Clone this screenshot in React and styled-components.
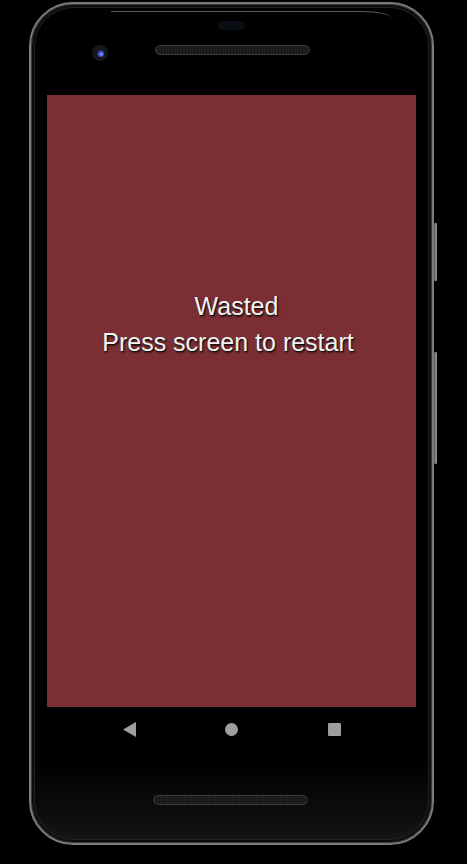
import styled, { createGlobalStyle } from 'styled-components';

const GlobalStyle = createGlobalStyle`
  html, body {
    margin: 0;
    padding: 0;
    background: #000;
  }
  body {
    width: 467px;
    height: 864px;
    overflow: hidden;
    font-family: "Liberation Sans", Arial, sans-serif;
  }
`;

const Stage = styled.div`
  width: 467px;
  height: 864px;
  padding: 2px 0 0 29px;
  box-sizing: border-box;
  background: #000;
`;

const PhoneBody = styled.div`
  position: relative;
  width: 405px;
  height: 843px;
  box-sizing: border-box;
  border: 2px solid #7c7c7c;
  border-radius: 44px;
  background: linear-gradient(to bottom, #000 0%, #000 90%, #0e0e0e 97%, #161616 100%);
  box-shadow: inset 0 0 0 1px #3a3a3a, inset 0 0 0 3px #0c0c0c, inset 0 0 0 4px #222;
  display: flex;
  flex-direction: column;
  align-items: center;
`;

const TopBezel = styled.div`
  position: relative;
  width: 100%;
  height: 91px;
  flex-shrink: 0;
`;

const Sensor = styled.div`
  position: absolute;
  left: 187px;
  top: 17px;
  width: 27px;
  height: 9px;
  border-radius: 5px;
  background: #0b0d14;
`;

const Camera = styled.div`
  position: absolute;
  left: 61px;
  top: 41px;
  width: 16px;
  height: 16px;
  border-radius: 50%;
  background: #15171c;
  display: flex;
  align-items: center;
  justify-content: center;

  &::after {
    content: '';
    width: 7px;
    height: 7px;
    border-radius: 50%;
    background: radial-gradient(circle at 60% 60%, #8ea0ff 0%, #2a3aa8 50%, #0d1240 100%);
  }
`;

const Speaker = styled.div`
  position: absolute;
  left: ${p => p.$left}px;
  top: ${p => p.$top}px;
  width: 153px;
  height: 8px;
  border-radius: 5px;
  border: 1px solid #3b3b3b;
  background: repeating-linear-gradient(to right, #202020 0px, #202020 2px, #141414 2px, #141414 3px);
`;

const Screen = styled.main`
  width: 369px;
  height: 612px;
  flex-shrink: 0;
  background: #7b2f34;
  display: flex;
  flex-direction: column;
  align-items: center;
  padding-top: 193px;
  box-sizing: border-box;
`;

const Message = styled.p`
  margin: 0;
  color: #f2f2f2;
  font-size: 25px;
  line-height: 36px;
  text-align: center;
  text-shadow: 1px 1px 1px #111, 1px 2px 2px rgba(0, 0, 0, 0.5);
  padding-left: ${p => p.$left || 0}px;
  padding-right: ${p => p.$right || 0}px;
`;

const NavBar = styled.nav`
  width: 369px;
  height: 44px;
  display: flex;
  justify-content: space-between;
  align-items: center;
  padding: 0 75px;
  box-sizing: border-box;
  flex-shrink: 0;
`;

const NavButton = styled.div`
  width: 14px;
  height: 14px;
  display: flex;
  align-items: center;
  justify-content: center;
`;

const HomeDot = styled.div`
  width: 13px;
  height: 13px;
  border-radius: 50%;
  background: #9e9e9e;
`;

const RecentSquare = styled.div`
  width: 13px;
  height: 13px;
  border-radius: 1px;
  background: #9e9e9e;
`;

const SideButton = styled.div`
  position: absolute;
  right: -5px;
  top: ${p => p.$top}px;
  width: 3px;
  height: ${p => p.$height}px;
  border-radius: 1px;
  background: linear-gradient(to right, #5a5a5a, #9a9a9a);
`;

const Glare = styled.div`
  position: absolute;
  left: 80px;
  right: 40px;
  top: 7px;
  height: 8px;
  border-top: 1px solid #6d6d6d;
  border-top-right-radius: 30px 8px;
  opacity: 0.8;
`;

const App = () => (
  <Stage>
    <GlobalStyle />
    <PhoneBody>
      <Glare />
      <TopBezel>
        <Sensor />
        <Camera />
        <Speaker $left={124} $top={41} />
      </TopBezel>
      <Screen>
        <Message $left={10}>Wasted</Message>
        <Message $right={7}>Press screen to restart</Message>
      </Screen>
      <NavBar>
        <NavButton>
          <svg width="13" height="15" viewBox="0 0 13 15">
            <path d="M0 7.5 L13 0 L13 15 Z" fill="#9e9e9e" />
          </svg>
        </NavButton>
        <NavButton>
          <HomeDot />
        </NavButton>
        <NavButton>
          <RecentSquare />
        </NavButton>
      </NavBar>
      <Speaker $left={122} $top={791} />
      <SideButton $top={219} $height={58} />
      <SideButton $top={348} $height={112} />
    </PhoneBody>
  </Stage>
);

export default App;
